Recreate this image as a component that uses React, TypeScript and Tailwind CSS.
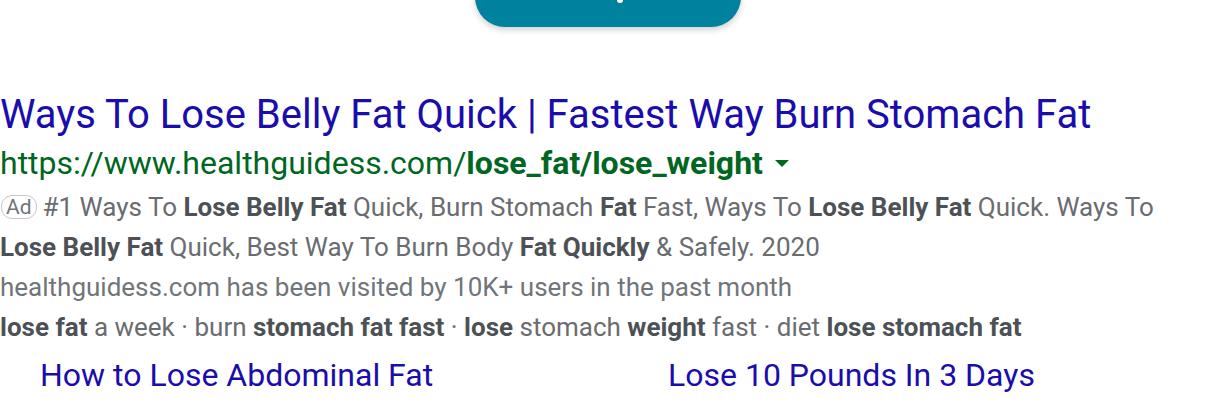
import React from "react";

const B = ({ children }: { children: React.ReactNode }) => (
  <b className="font-bold text-[#4d5156]">{children}</b>
);

export default function App() {
  return (
    <div
      className="w-[1216px] h-[410px] overflow-hidden bg-white"
      style={{ fontFamily: "Roboto, 'Liberation Sans', sans-serif" }}
    >
      <div className="flex justify-center">
        <div className="mt-[-33px] w-[266px] h-[60px] rounded-full bg-[#00819e] shadow-[0_3px_6px_rgba(0,0,0,0.18)] flex items-start justify-center">
          <div className="mt-[33px] ml-[24px] w-[6px] h-[3px] rounded-b-full bg-white" />
        </div>
      </div>

      <div className="mt-[64px] text-[40px] leading-[48px] text-[#1a0dab] whitespace-nowrap">
        Ways To Lose Belly Fat Quick | Fastest Way Burn Stomach Fat
      </div>

      <div className="mt-[4px] text-[32px] leading-[40px] text-[#006621] whitespace-nowrap flex items-center">
        <span>
          https://www.healthguidess.com/<b className="font-bold">lose_fat/lose_weight</b>
        </span>
        <svg width="14" height="8" viewBox="0 0 14 8" className="ml-[12px] mt-[2px]">
          <path d="M0 0 L14 0 L7 7 Z" fill="#006621" />
        </svg>
      </div>

      <div className="mt-[4px] text-[26px] leading-[40px] text-[#6a6c70]">
        <div className="whitespace-nowrap">
          <span className="inline-block border border-[#c8c8c8] rounded-[11px] text-[21px] leading-[22px] px-[4px] mr-[6px] ml-[1px] text-[#70757a] align-[2px]">
            Ad
          </span>
          #1 Ways To <B>Lose Belly Fat</B> Quick, Burn Stomach <B>Fat</B> Fast, Ways To <B>Lose Belly Fat</B> Quick. Ways To
        </div>
        <div className="whitespace-nowrap">
          <B>Lose Belly Fat</B> Quick, Best Way To Burn Body <B>Fat Quickly</B> &amp; Safely. 2020
        </div>
        <div className="whitespace-nowrap text-[#70757a]">
          healthguidess.com has been visited by 10K+ users in the past month
        </div>
        <div className="whitespace-nowrap">
          <B>lose fat</B> a week · burn <B>stomach fat fast</B> · <B>lose</B> stomach <B>weight</B> fast · diet{" "}
          <B>lose stomach fat</B>
        </div>
      </div>

      <div className="mt-[8px] pl-[40px] grid grid-cols-[628px_1fr] text-[32px] leading-[40px] text-[#1a0dab] whitespace-nowrap">
        <div>How to Lose Abdominal Fat</div>
        <div>Lose 10 Pounds In 3 Days</div>
      </div>
    </div>
  );
}
